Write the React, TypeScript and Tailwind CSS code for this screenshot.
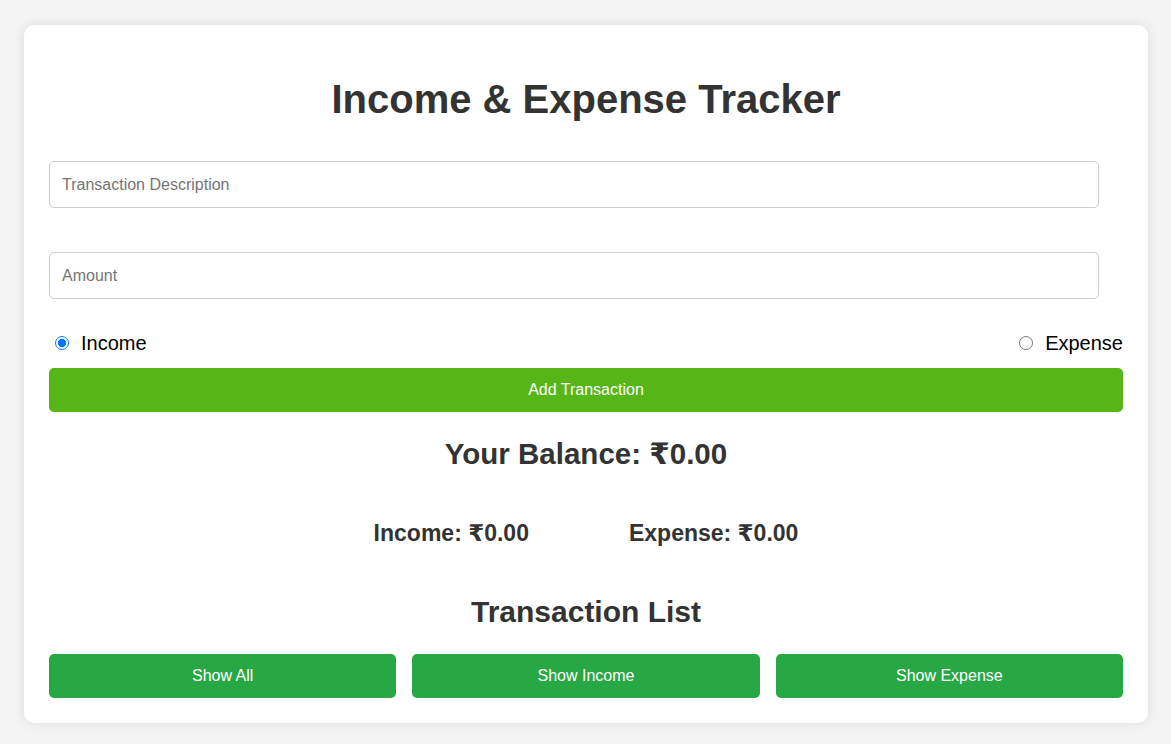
import React, { useState } from 'react';

type Kind = 'income' | 'expense';

const App: React.FC = () => {
  const [desc, setDesc] = useState('');
  const [amount, setAmount] = useState('');
  const [kind, setKind] = useState<Kind>('income');

  const font = { fontFamily: '"Liberation Sans", Arial, "DejaVu Sans", sans-serif' };

  return (
    <div className="min-h-screen bg-[#f4f4f4] pt-[25px] pb-[21px] pl-[24px] pr-[23px]" style={font}>
      <div className="bg-white rounded-[10px] shadow-[0_0_12px_rgba(0,0,0,0.1)] px-[25px] pt-[51px] pb-[25px] text-[#333]">
        <h1 className="text-[40px] leading-[46px] font-bold text-center">Income &amp; Expense Tracker</h1>

        <input
          value={desc}
          onChange={(e) => setDesc(e.target.value)}
          placeholder="Transaction Description"
          className="mt-[39px] block w-[1050px] h-[47px] px-[12px] border border-[#ccc] rounded-[5px] text-[16px] text-[#333] placeholder:text-[#757575] outline-none"
        />
        <input
          value={amount}
          onChange={(e) => setAmount(e.target.value)}
          placeholder="Amount"
          className="mt-[44px] block w-[1050px] h-[47px] px-[12px] border border-[#ccc] rounded-[5px] text-[16px] text-[#333] placeholder:text-[#757575] outline-none"
        />

        <div className="mt-[32px] flex items-center justify-between h-[23px] text-[20px] text-black">
          <label className="flex items-center gap-[12px] pl-[6px]">
            <input
              type="radio"
              name="kind"
              checked={kind === 'income'}
              onChange={() => setKind('income')}
              className="w-[14px] h-[14px] accent-[#0075ff]"
            />
            Income
          </label>
          <label className="flex items-center gap-[12px]">
            <input
              type="radio"
              name="kind"
              checked={kind === 'expense'}
              onChange={() => setKind('expense')}
              className="w-[14px] h-[14px] accent-[#0075ff]"
            />
            Expense
          </label>
        </div>

        <button className="mt-[14px] w-full h-[44px] bg-[#56b517] text-white text-[16px] rounded-[5px]">
          Add Transaction
        </button>

        <h2 className="mt-[25px] text-[29.5px] leading-[33px] font-bold text-center">Your Balance: ₹0.00</h2>

        <div className="mt-[50px] flex justify-center gap-[100px] text-[23px] leading-[27px] font-bold">
          <span>Income: ₹0.00</span>
          <span>Expense: ₹0.00</span>
        </div>

        <h2 className="mt-[48px] text-[30px] leading-[34px] font-bold text-center">Transaction List</h2>

        <div className="mt-[25px] grid grid-cols-3 gap-[16px]">
          <button className="h-[44px] bg-[#28a745] text-white text-[16px] rounded-[5px]">Show All</button>
          <button className="h-[44px] bg-[#28a745] text-white text-[16px] rounded-[5px]">Show Income</button>
          <button className="h-[44px] bg-[#28a745] text-white text-[16px] rounded-[5px]">Show Expense</button>
        </div>
      </div>
    </div>
  );
};

export default App;
